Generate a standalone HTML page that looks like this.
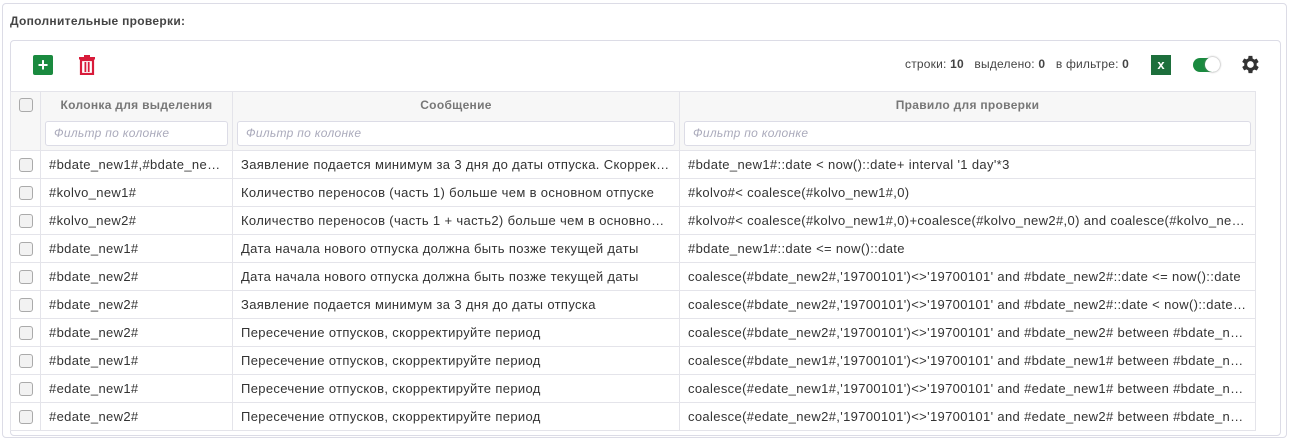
<!DOCTYPE html>
<html><head><meta charset="utf-8"><style>
*{box-sizing:border-box;margin:0;padding:0}
body{width:1290px;height:441px;background:#fff;font-family:"Liberation Sans",sans-serif;color:#333;font-size:13px;position:relative;overflow:hidden}
.outer{position:absolute;left:2px;top:3px;width:1285px;height:435px;border:1px solid #dcdce6;border-radius:4px}
.title{position:absolute;left:10px;top:14px;font-size:12px;font-weight:bold;color:#444;letter-spacing:0.3px}
.card{position:absolute;left:10px;top:40px;width:1271px;height:396px;border:1px solid #dcdce6;border-radius:4px}
.abs{position:absolute}
table{position:absolute;left:10px;top:91px;border-collapse:collapse;table-layout:fixed;width:1245px}
td,th{border:1px solid #e4e4ea;height:28px;padding:0 8px;white-space:nowrap;overflow:hidden;text-overflow:ellipsis;font-size:13px;letter-spacing:0.35px}
th{background:#f7f7f7;font-weight:bold;color:#777;font-size:12px;height:26px;border-bottom:none;letter-spacing:0.3px}
tr.f td{background:#f7f7f7;height:33px;padding:0 4px;border-top:none}
.inp{border:1px solid #dcdce6;border-radius:3px;background:#fff;height:25px;font-style:italic;color:#aab;font-size:12px;line-height:23px;padding-left:8px;letter-spacing:0.3px}
.cb{width:14px;height:14px;border:1px solid #aaa;border-radius:3px;background:#f2f2f2;margin:auto}
td:first-child,th:first-child{padding:0}
</style></head><body>
<div class="outer"></div>
<div class="title">Дополнительные проверки:</div>
<div class="card"></div>
<div class="abs" style="left:33px;top:55px;width:20px;height:20px;background:#1a8a3f;border-radius:2px;color:#fff;font-size:18px;font-weight:bold;text-align:center;line-height:20px">+</div>
<svg class="abs" style="left:79px;top:55px" width="16" height="20" viewBox="0 0 16 20"><rect x="0" y="2" width="16" height="2.5" fill="#d81b3a"/><rect x="5" y="0" width="6" height="3" fill="#d81b3a"/><path d="M2 5h12v14H2z" fill="none" stroke="#d81b3a" stroke-width="2.2"/><rect x="5.5" y="7" width="1.8" height="10" fill="#d81b3a"/><rect x="8.8" y="7" width="1.8" height="10" fill="#d81b3a"/></svg>
<div class="abs" style="left:905px;top:57px;font-size:12px;color:#444;letter-spacing:0.2px">строки: <b>10</b>&nbsp;&nbsp; выделено: <b>0</b>&nbsp;&nbsp; в фильтре: <b>0</b></div>
<div class="abs" style="left:1151px;top:55px;width:20px;height:20px;background:#1d6f3c;color:#fff;font-size:13px;font-weight:bold;text-align:center;line-height:20px">x</div>
<div class="abs" style="left:1193px;top:58px;width:26px;height:14px;background:#1a8a3f;border-radius:7px"></div>
<div class="abs" style="left:1205px;top:57px;width:15px;height:15px;background:#fff;border-radius:50%;box-shadow:0 0 2px #888"></div>
<svg class="abs" style="left:1238px;top:53px" width="23" height="23" viewBox="0 0 24 24"><path fill="#333" d="M19.4 13a7.5 7.5 0 0 0 0-2l2.1-1.6-2-3.5-2.5 1a7.5 7.5 0 0 0-1.7-1L15 3h-4l-.4 2.7a7.5 7.5 0 0 0-1.7 1l-2.5-1-2 3.5L6.6 11a7.5 7.5 0 0 0 0 2l-2.200 1.6 2 3.5 2.5-1a7.5 7.5 0 0 0 1.7 1L11 21h4l.4-2.7a7.5 7.5 0 0 0 1.7-1l2.5 1 2-3.5zM13 15.5a3.5 3.5 0 1 1 0-7 3.5 3.5 0 0 1 0 7z"/></svg>
<table>
<colgroup><col style="width:30px"><col style="width:192px"><col style="width:447px"><col style="width:576px"></colgroup>
<tr><th><div class="cb"></div></th><th>Колонка для выделения</th><th>Сообщение</th><th>Правило для проверки</th></tr>
<tr class="f"><td></td><td><div class="inp">Фильтр по колонке</div></td><td><div class="inp">Фильтр по колонке</div></td><td><div class="inp">Фильтр по колонке</div></td></tr>
<tr><td><div class="cb"></div></td><td>#bdate_new1#,#bdate_new2#</td><td>Заявление подается минимум за 3 дня до даты отпуска. Скорректируйте период</td><td>#bdate_new1#::date &lt; now()::date+ interval '1 day'*3</td></tr>
<tr><td><div class="cb"></div></td><td>#kolvo_new1#</td><td>Количество переносов (часть 1) больше чем в основном отпуске</td><td>#kolvo#&lt; coalesce(#kolvo_new1#,0)</td></tr>
<tr><td><div class="cb"></div></td><td>#kolvo_new2#</td><td>Количество переносов (часть 1 + часть2) больше чем в основном отпуске</td><td>#kolvo#&lt; coalesce(#kolvo_new1#,0)+coalesce(#kolvo_new2#,0) and coalesce(#kolvo_new2#,0)&gt;0</td></tr>
<tr><td><div class="cb"></div></td><td>#bdate_new1#</td><td>Дата начала нового отпуска должна быть позже текущей даты</td><td>#bdate_new1#::date &lt;= now()::date</td></tr>
<tr><td><div class="cb"></div></td><td>#bdate_new2#</td><td>Дата начала нового отпуска должна быть позже текущей даты</td><td>coalesce(#bdate_new2#,'19700101')&lt;&gt;'19700101' and #bdate_new2#::date &lt;= now()::date</td></tr>
<tr><td><div class="cb"></div></td><td>#bdate_new2#</td><td>Заявление подается минимум за 3 дня до даты отпуска</td><td>coalesce(#bdate_new2#,'19700101')&lt;&gt;'19700101' and #bdate_new2#::date &lt; now()::date+ interval</td></tr>
<tr><td><div class="cb"></div></td><td>#bdate_new2#</td><td>Пересечение отпусков, скорректируйте период</td><td>coalesce(#bdate_new2#,'19700101')&lt;&gt;'19700101' and #bdate_new2# between #bdate_new1# and #edate_new1#</td></tr>
<tr><td><div class="cb"></div></td><td>#bdate_new1#</td><td>Пересечение отпусков, скорректируйте период</td><td>coalesce(#bdate_new1#,'19700101')&lt;&gt;'19700101' and #bdate_new1# between #bdate_new2# and #edate_new2#</td></tr>
<tr><td><div class="cb"></div></td><td>#edate_new1#</td><td>Пересечение отпусков, скорректируйте период</td><td>coalesce(#edate_new1#,'19700101')&lt;&gt;'19700101' and #edate_new1# between #bdate_new2# and #edate_new2#</td></tr>
<tr><td><div class="cb"></div></td><td>#edate_new2#</td><td>Пересечение отпусков, скорректируйте период</td><td>coalesce(#edate_new2#,'19700101')&lt;&gt;'19700101' and #edate_new2# between #bdate_new1# and #edate_new1#</td></tr>
</table>
</body></html>
